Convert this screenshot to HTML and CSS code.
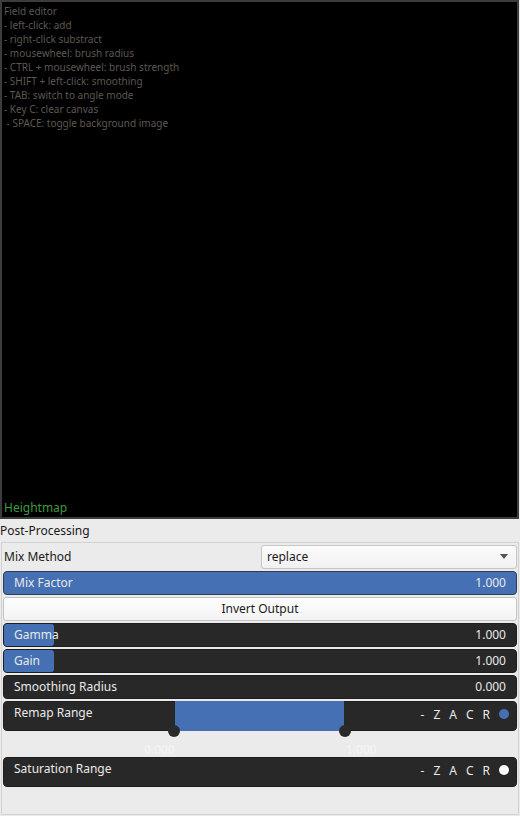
FILE: index.html
```html
<!DOCTYPE html>
<html>
<head>
    <title>Field Editor</title>
    <link rel="stylesheet" href="styles.css">
</head>
<body>
    <div class="canvas">
        <div class="help">
            <div>Field editor</div>
            <div>- left-click: add</div>
            <div>- right-click substract</div>
            <div>- mousewheel: brush radius</div>
            <div>- CTRL + mousewheel: brush strength</div>
            <div>- SHIFT + left-click: smoothing</div>
            <div>- TAB: switch to angle mode</div>
            <div>- Key C: clear canvas</div>
            <div>&nbsp;- SPACE: toggle background image</div>
        </div>
        <div class="canvas-name">Heightmap</div>
    </div>

    <div class="section-title">Post-Processing</div>

    <div class="panel">
        <div class="combo-row">
            <span>Mix Method</span>
            <div class="combo">
                <span>replace</span>
                <span class="arrow"></span>
            </div>
        </div>

        <div class="slider full">
            <span>Mix Factor</span>
            <span>1.000</span>
        </div>

        <button class="btn">Invert Output</button>

        <div class="slider">
            <div class="fill" style="width: 50px"></div>
            <span>Gamma</span>
            <span>1.000</span>
        </div>
        <div class="slider">
            <div class="fill" style="width: 50px"></div>
            <span>Gain</span>
            <span>1.000</span>
        </div>
        <div class="slider">
            <span>Smoothing Radius</span>
            <span>0.000</span>
        </div>

        <div class="range">
            <div class="range-bar">
                <div class="range-fill" style="left: 171px; width: 169px"></div>
                <div class="handle" style="left: 164px"></div>
                <div class="handle" style="left: 335px"></div>
                <span>Remap Range</span>
                <div class="tools">
                    <span>-</span><span>Z</span><span>A</span><span>C</span><span>R</span>
                    <span class="dot blue"></span>
                </div>
            </div>
            <div class="range-labels">
                <span style="left: 141px">0.000</span>
                <span style="left: 343px">1.000</span>
            </div>
        </div>

        <div class="range-bar">
            <span>Saturation Range</span>
            <div class="tools">
                <span>-</span><span>Z</span><span>A</span><span>C</span><span>R</span>
                <span class="dot white"></span>
            </div>
        </div>
    </div>
</body>
</html>
```

FILE: styles.css
```css
body {
    margin: 0;
    width: 520px;
    height: 816px;
    background-color: #ebebeb;
    font-family: "Noto Sans", "Open Sans", sans-serif;
    font-size: 12px;
    color: #1a1a1a;
    overflow: hidden;
}

.canvas {
    box-sizing: border-box;
    width: 519px;
    height: 519px;
    background-color: #000;
    border: 2px solid #3c3c3c;
    display: flex;
    flex-direction: column;
    justify-content: space-between;
    padding: 2px 2px 1px 2px;
}

.help {
    font-size: 10px;
    line-height: 14px;
    color: #5e5850;
}

.canvas-name {
    font-size: 12px;
    line-height: 16px;
    color: #3f9a3f;
}

.section-title {
    height: 23px;
    line-height: 23px;
}

.panel {
    box-sizing: border-box;
    margin-left: 1px;
    width: 518px;
    height: 273px;
    border: 1px solid #d2d2d2;
    padding: 1px;
    display: flex;
    flex-direction: column;
    gap: 2px;
}

.combo-row {
    display: flex;
    justify-content: space-between;
    align-items: center;
    height: 25px;
    padding-left: 1px;
}

.combo {
    box-sizing: border-box;
    width: 256px;
    height: 24px;
    border: 1px solid #c6c6c6;
    border-radius: 3px;
    background: linear-gradient(#fbfbfb, #f1f1f1);
    display: flex;
    justify-content: space-between;
    align-items: center;
    padding: 0 8px 0 5px;
}

.arrow {
    width: 0;
    height: 0;
    border-left: 4px solid transparent;
    border-right: 4px solid transparent;
    border-top: 5px solid #555;
}

.slider, .range-bar {
    position: relative;
    box-sizing: border-box;
    height: 24px;
    background-color: #282828;
    border: 1px solid #1e1e1e;
    border-radius: 4px;
    color: #e8e8e8;
    display: flex;
    justify-content: space-between;
    align-items: center;
    padding: 0 10px 1px 10px;
}

.slider span, .range-bar > span {
    position: relative;
}

.slider.full {
    background-color: #4571b4;
    border-color: #2d3b55;
}

.fill {
    position: absolute;
    left: 0;
    top: 0;
    bottom: 0;
    background-color: #4571b4;
    border-radius: 3px;
}

.btn {
    height: 24px;
    border: 1px solid #c4c4c4;
    border-radius: 3px;
    background: linear-gradient(#fdfdfd, #f3f3f3);
    font-family: inherit;
    font-size: 12px;
    color: #1a1a1a;
    padding: 0 0 1px 0;
}

.range {
    display: flex;
    flex-direction: column;
}

.range-bar {
    height: 30px;
    align-items: flex-start;
    padding-top: 2px;
}

.range-fill {
    position: absolute;
    top: -1px;
    bottom: -1px;
    background-color: #4571b4;
}

.handle {
    position: absolute;
    bottom: -7px;
    width: 12px;
    height: 12px;
    border-radius: 50%;
    background-color: #2a2a2a;
}

.range-labels {
    position: relative;
    height: 24px;
}

.range-labels span {
    position: absolute;
    top: 10px;
    color: #f6f6f6;
}

.tools {
    position: relative;
    display: flex;
    align-items: center;
    gap: 9px;
    height: 20px;
    color: #e8e8e8;
    margin-right: -3px;
}

.dot {
    width: 10px;
    height: 10px;
    border-radius: 50%;
}

.dot.blue {
    background-color: #4571b4;
}

.dot.white {
    background-color: #fff;
}
```
